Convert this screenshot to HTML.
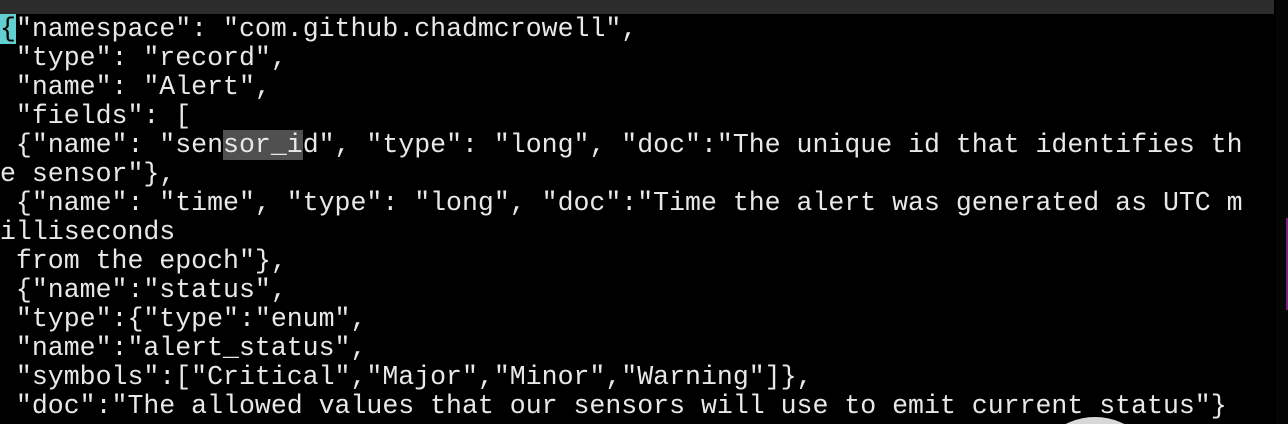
<!DOCTYPE html>
<html><head><meta charset="utf-8"><style>
html,body{margin:0;padding:0;background:#000;width:1288px;height:424px;overflow:hidden;position:relative}
.bar{position:absolute;left:0;top:0;width:1274px;height:14px;background:#2c2c2d}
.side{position:absolute;left:1276px;top:0;width:12px;height:424px;background:#050505}
.purple{position:absolute;left:1286px;top:218px;width:2px;height:92px;background:#7a1e7a}
pre{position:absolute;left:0;top:15px;margin:0;font-family:"Liberation Mono",monospace;font-size:26.55px;line-height:29px;color:#e8e8e8;letter-spacing:0;}
.cur{background:#62d0d0;color:#000}
.hl{background:#505050}
.clip{position:absolute;left:1030px;top:417px;width:130px;height:7px;overflow:hidden}
.circ{position:absolute;left:0;top:0;width:130px;height:130px;border-radius:50%;background:#d8d8d8}
</style></head><body>
<div class="bar"></div><div class="side"></div><div class="purple"></div>
<pre><span class="cur">{</span>"namespace": "com.github.chadmcrowell",
 "type": "record",
 "name": "Alert",
 "fields": [
 {"name": "sen<span class="hl">sor_i</span>d", "type": "long", "doc":"The unique id that identifies th
e sensor"},
 {"name": "time", "type": "long", "doc":"Time the alert was generated as UTC m
illiseconds
 from the epoch"},
 {"name":"status",
 "type":{"type":"enum",
 "name":"alert_status",
 "symbols":["Critical","Major","Minor","Warning"]},
 "doc":"The allowed values that our sensors will use to emit current status"}</pre>
<div class="clip"><div class="circ"></div></div>
</body></html>
